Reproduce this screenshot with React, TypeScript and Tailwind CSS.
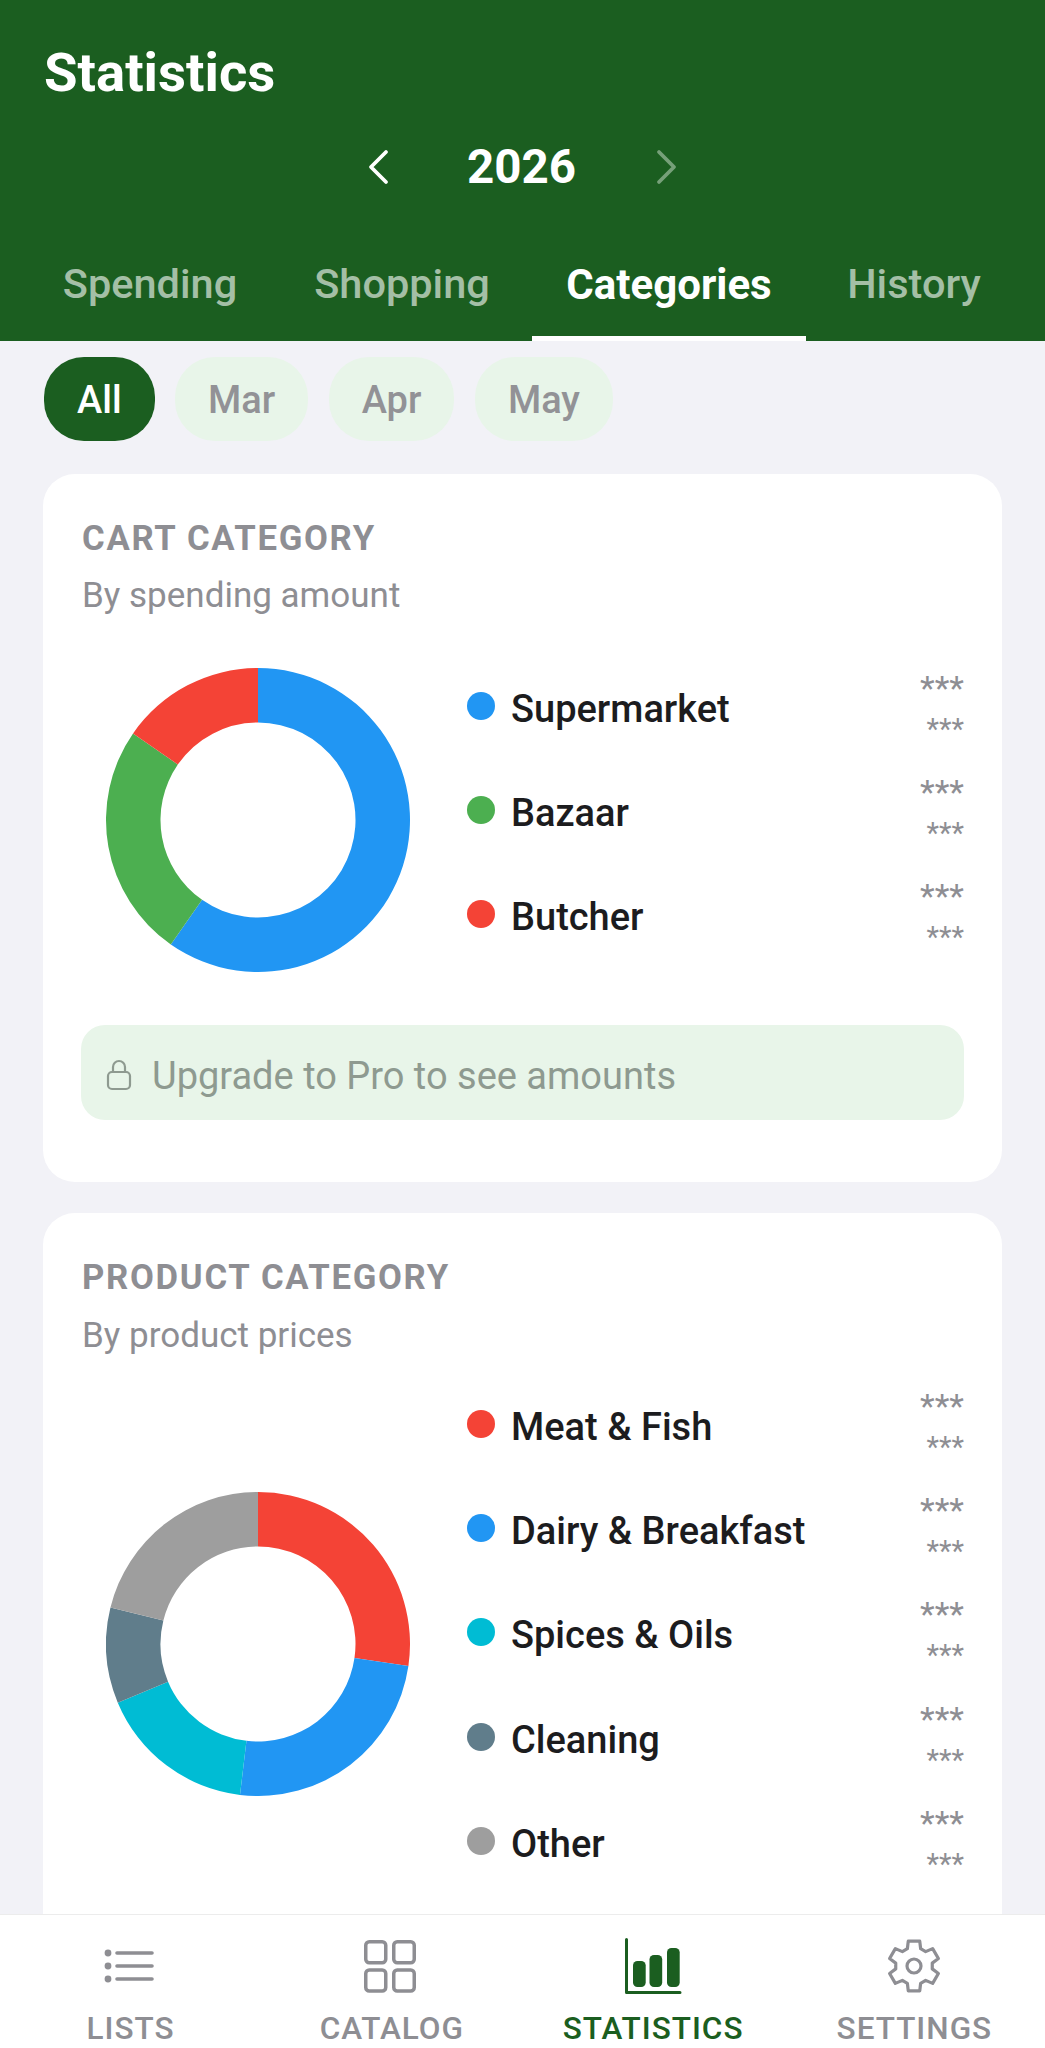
import React from "react";

const pt = (cx: number, cy: number, r: number, a: number) => {
  const t = ((a - 90) * Math.PI) / 180;
  return [cx + r * Math.cos(t), cy + r * Math.sin(t)];
};

function Donut({ segs }: { segs: { from: number; to: number; color: string }[] }) {
  const c = 152, R = 152, r = 97.5;
  return (
    <svg width="304" height="304" viewBox="0 0 304 304" className="shrink-0">
      {segs.map((s, i) => {
        const [x1, y1] = pt(c, c, R, s.from);
        const [x2, y2] = pt(c, c, R, s.to);
        const [x3, y3] = pt(c, c, r, s.to);
        const [x4, y4] = pt(c, c, r, s.from);
        const large = s.to - s.from > 180 ? 1 : 0;
        return (
          <path
            key={i}
            fill={s.color}
            d={`M${x1} ${y1}A${R} ${R} 0 ${large} 1 ${x2} ${y2}L${x3} ${y3}A${r} ${r} 0 ${large} 0 ${x4} ${y4}Z`}
          />
        );
      })}
    </svg>
  );
}

function Gear() {
  const pts: string[] = [];
  for (let k = 0; k < 6; k++) {
    const t = k * 60;
    for (const [da, r] of [[-13, 25.5], [13, 25.5], [21, 18.5], [39, 18.5]] as const) {
      const [x, y] = pt(27, 27, r, t + da);
      pts.push(`${x.toFixed(2)} ${y.toFixed(2)}`);
    }
  }
  return (
    <svg width="54" height="54" viewBox="0 0 54 54" fill="none" stroke="#8e8e93" strokeWidth="3.2" strokeLinejoin="round">
      <path d={`M${pts.join("L")}Z`} />
      <circle cx="27" cy="27" r="7" />
    </svg>
  );
}

function LegendRow({ color, label }: { color: string; label: string }) {
  return (
    <div className="flex h-[104.2px] items-center">
      <span className="h-[28px] w-[28px] shrink-0 rounded-full" style={{ backgroundColor: color }} />
      <span className="relative top-[3px] ml-[16px] flex-1 text-[38px] font-medium leading-none text-[#1c1c1e]">{label}</span>
      <div className="relative top-[3px] flex flex-col items-end text-[#8e8e93]">
        <span className="h-[41px] text-[34px] leading-[41px]">***</span>
        <span className="h-[41px] text-[29px] leading-[41px]">***</span>
      </div>
    </div>
  );
}

function Pill({ label, active }: { label: string; active?: boolean }) {
  return (
    <div
      className={
        "flex h-[84px] items-center justify-center rounded-[40px] px-[33px] pt-[2px] text-[38px] font-medium " +
        (active ? "bg-[#1b5e20] text-white" : "bg-[#e8f5e9] text-[#929296]")
      }
    >
      {label}
    </div>
  );
}

function Tab({ label, active, w }: { label: string; active?: boolean; w: string }) {
  return (
    <div className={"flex h-full items-center justify-center pb-[23px] " + w}>
      <span className={active ? "text-[42px] font-bold text-white" : "text-[41.5px] font-medium text-[#a4bfa6]"}>{label}</span>
    </div>
  );
}

function NavItem({ icon, label, active }: { icon: React.ReactNode; label: string; active?: boolean }) {
  return (
    <div className="flex w-[261.25px] flex-col items-center">
      <div className="flex h-[60px] w-[60px] items-center justify-center">{icon}</div>
      <span className={"mt-[15px] text-[31.5px] font-medium leading-[36px] tracking-[1px] " + (active ? "text-[#1b5e20]" : "text-[#8e8e93]")}>{label}</span>
    </div>
  );
}

export default function App() {
  return (
    <div className="relative flex h-[2048px] w-[1045px] flex-col overflow-hidden bg-[#f2f2f7] font-['Roboto',sans-serif]">
      <header className="h-[341px] shrink-0 bg-[#1b5e20] pt-[39px]">
        <h1 className="pl-[44px] text-[54.5px] font-bold leading-[66px] text-white">Statistics</h1>
        <div className="mt-[29px] flex h-[66px] items-center justify-center">
          <svg width="24" height="38" viewBox="0 0 24 38" fill="none" stroke="#ffffff" strokeWidth="3.8" strokeLinecap="round" strokeLinejoin="round">
            <path d="M20 4L5 19L20 34" />
          </svg>
          <span className="w-[265px] pr-[2px] pt-[2px] text-center text-[47.5px] font-bold leading-none text-white">2026</span>
          <svg width="24" height="38" viewBox="0 0 24 38" fill="none" stroke="#76a079" strokeWidth="3.8" strokeLinecap="round" strokeLinejoin="round">
            <path d="M4 4L19 19L4 34" />
          </svg>
        </div>
        <div className="mt-[51px] flex h-[90px] items-stretch">
          <Tab label="Spending" w="w-[300px]" />
          <Tab label="Shopping" w="w-[204px]" />
          <div className="relative ml-[28px] w-[274px]">
            <Tab label="Categories" active w="w-full" />
            <div className="absolute bottom-0 left-0 h-[5px] w-full bg-white" />
          </div>
          <Tab label="History" w="w-[216px]" />
        </div>
      </header>

      <main className="flex-1 overflow-hidden px-[43px]">
        <div className="mt-[16px] flex gap-[20.5px] pl-[1px]">
          <Pill label="All" active />
          <Pill label="Mar" />
          <Pill label="Apr" />
          <Pill label="May" />
        </div>

        <section className="mt-[33px] h-[708px] rounded-[32px] bg-white px-[38px] pt-[44px]">
          <div className="pl-[1px] text-[34.7px] font-bold leading-[40px] tracking-[1.7px] text-[#8e8e93]">CART CATEGORY</div>
          <div className="mt-[18px] pl-[1px] text-[35px] leading-[40px] text-[#8e8e93]">By spending amount</div>
          <div className="mt-[39px] flex items-start">
            <div className="ml-[25px] mt-[13px]">
              <Donut
                segs={[
                  { from: 0, to: 215, color: "#2196f3" },
                  { from: 215, to: 304.7, color: "#4caf50" },
                  { from: 304.7, to: 360, color: "#f44336" },
                ]}
              />
            </div>
            <div className="ml-[57px] mt-[-1px] flex-1">
              <LegendRow color="#2196f3" label="Supermarket" />
              <LegendRow color="#4caf50" label="Bazaar" />
              <LegendRow color="#f44336" label="Butcher" />
            </div>
          </div>
          <div className="mt-[53.4px] flex h-[95px] items-center rounded-[24px] bg-[#e8f5e9] pl-[25px]">
            <svg width="26" height="32" viewBox="0 0 26 32" fill="none" stroke="#8e9a90" strokeWidth="2.2" className="mt-[4px]">
              <rect x="2" y="13" width="22" height="17" rx="4" />
              <path d="M7 13V8a6 6 0 0 1 12 0v5" />
            </svg>
            <span className="ml-[20px] pt-[7px] text-[38px] text-[#8e9a90]">Upgrade to Pro to see amounts</span>
          </div>
        </section>

        <section className="mt-[31px] h-[800px] rounded-[32px] bg-white px-[38px] pt-[44px]">
          <div className="pl-[1px] text-[34.7px] font-bold leading-[40px] tracking-[1.7px] text-[#8e8e93]">PRODUCT CATEGORY</div>
          <div className="mt-[19px] pl-[1px] text-[35px] leading-[40px] text-[#8e8e93]">By product prices</div>
          <div className="mt-[16px] flex items-center">
            <div className="ml-[25px] mt-[24px]">
              <Donut
                segs={[
                  { from: 0, to: 98.3, color: "#f44336" },
                  { from: 98.3, to: 186.8, color: "#2196f3" },
                  { from: 186.8, to: 247.3, color: "#00bcd4" },
                  { from: 247.3, to: 283.9, color: "#607d8b" },
                  { from: 283.9, to: 360, color: "#9e9e9e" },
                ]}
              />
            </div>
            <div className="ml-[57px] flex-1">
              <LegendRow color="#f44336" label="Meat & Fish" />
              <LegendRow color="#2196f3" label="Dairy & Breakfast" />
              <LegendRow color="#00bcd4" label="Spices & Oils" />
              <LegendRow color="#607d8b" label="Cleaning" />
              <LegendRow color="#9e9e9e" label="Other" />
            </div>
          </div>
        </section>
      </main>

      <nav className="absolute bottom-0 left-0 flex h-[134px] w-full items-start border-t border-[#ececec] bg-white pt-[21px]">
        <NavItem
          label="LISTS"
          icon={
            <svg width="50" height="36" viewBox="0 0 50 36" fill="none" className="mr-[3px]">
              <path d="M13 5h35M13 18h35M13 31h35" stroke="#8e8e93" strokeWidth="3.6" strokeLinecap="round" />
              <circle cx="4" cy="5" r="3.4" fill="#8e8e93" />
              <circle cx="4" cy="18" r="3.4" fill="#8e8e93" />
              <circle cx="4" cy="31" r="3.4" fill="#8e8e93" />
            </svg>
          }
        />
        <NavItem
          label="CATALOG"
          icon={
            <svg width="52" height="53" viewBox="0 0 52 53" fill="none" stroke="#8e8e93" strokeWidth="3.5" className="mr-[3px]">
              <rect x="1.75" y="1.75" width="20" height="21" rx="3.5" />
              <rect x="29.75" y="1.75" width="20.5" height="21" rx="3.5" />
              <rect x="1.75" y="30" width="20" height="21" rx="3.5" />
              <rect x="29.75" y="30" width="20.5" height="21" rx="3.5" />
            </svg>
          }
        />
        <NavItem
          label="STATISTICS"
          active
          icon={
            <svg width="58" height="58" viewBox="0 0 58 58" fill="#1b5e20">
              <path d="M2.5 2.5V55.5H56" fill="none" stroke="#1b5e20" strokeWidth="3" strokeLinecap="round" strokeLinejoin="round" />
              <rect x="9" y="24" width="12.7" height="26" rx="4.5" />
              <rect x="25.5" y="18" width="12.7" height="32" rx="4.5" />
              <rect x="43" y="11" width="12.7" height="39" rx="4.5" />
            </svg>
          }
        />
        <NavItem label="SETTINGS" icon={<Gear />} />
      </nav>
    </div>
  );
}
